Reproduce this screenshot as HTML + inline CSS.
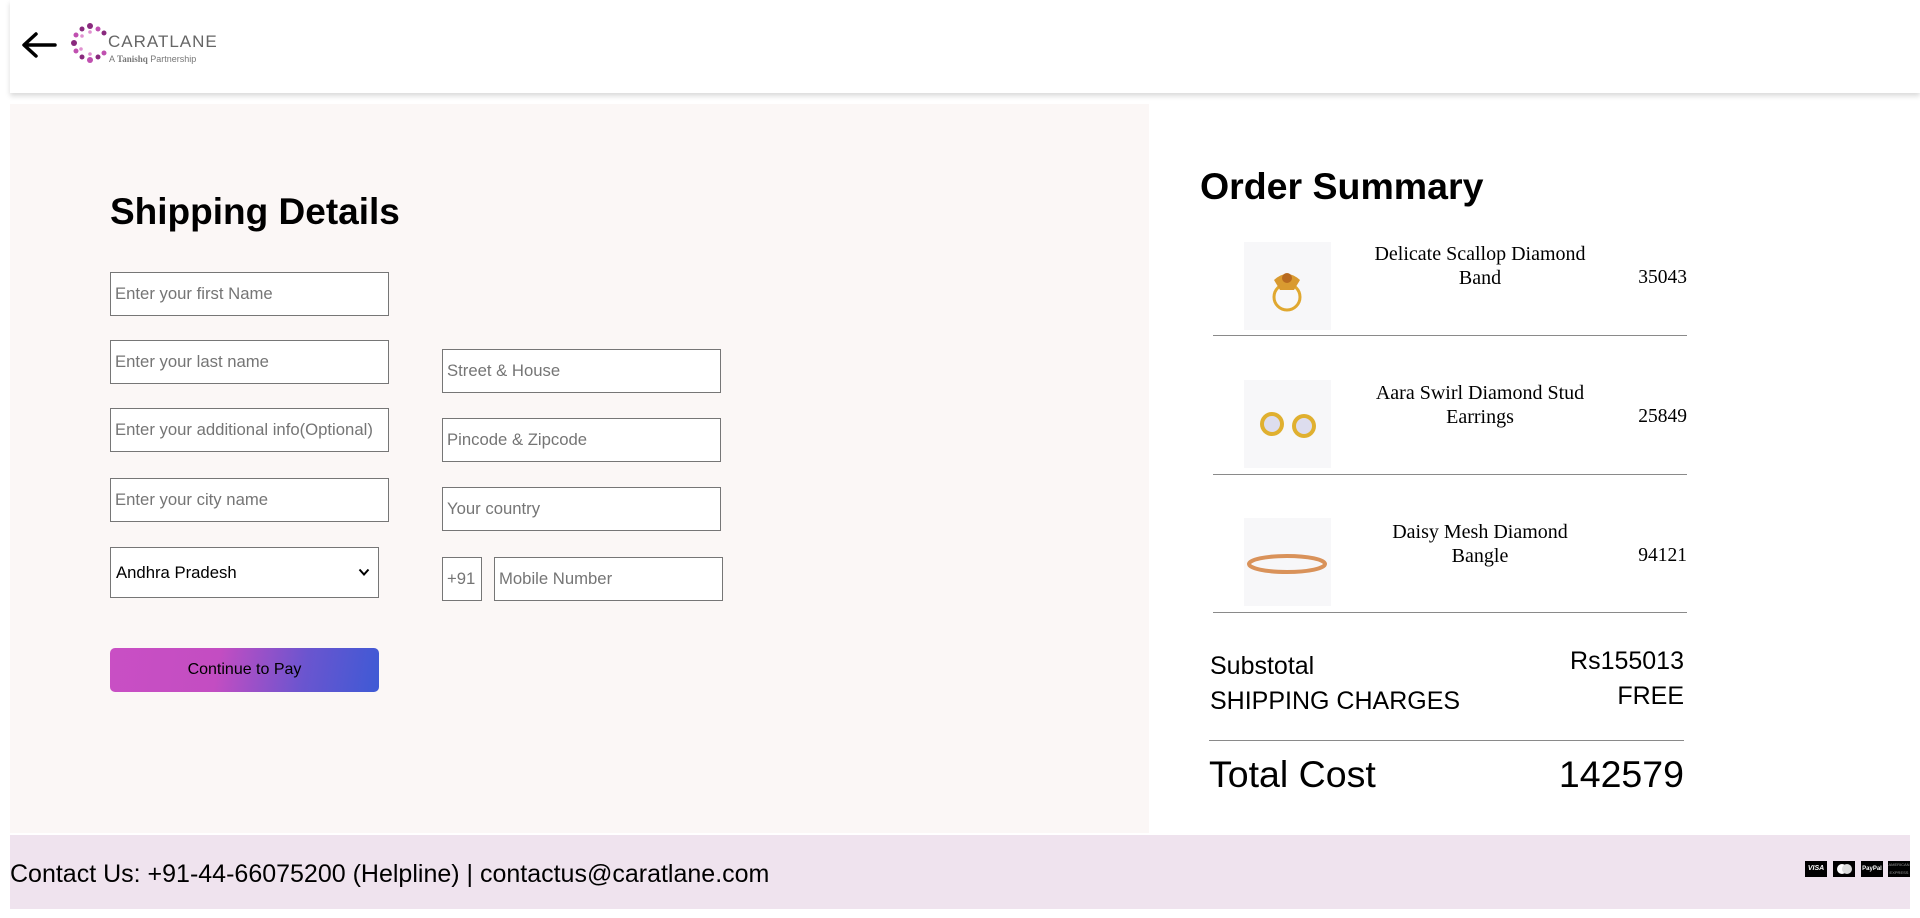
<!DOCTYPE html>
<html><head><meta charset="utf-8"><style>
*{box-sizing:border-box;margin:0;padding:0}
body{width:1920px;height:918px;background:#fff;font-family:"Liberation Sans",Arial,sans-serif;position:relative;overflow:hidden}
.a{position:absolute}
.hdr{left:10px;top:0;width:1910px;height:93px;background:#fff;box-shadow:0 3px 5px rgba(0,0,0,.15)}
.left{left:10px;top:104px;width:1139px;height:729px;background:#fbf7f6}
.inp{position:absolute;height:44px;border:1px solid #767676;background:#fff;font-size:16.7px;color:#757575;padding-left:4px;line-height:42px;white-space:nowrap;overflow:hidden}
.serif{font-family:"Liberation Serif","Times New Roman",serif}
.name{position:absolute;width:270px;text-align:center;font-size:20px;line-height:24px}
.price{position:absolute;right:233px;font-size:19.5px}
.img{position:absolute;left:1244px;width:87px;height:88px;background:#f7f7f9}
.hr{position:absolute;left:1213px;width:474px;height:1px;background:#8a8a8a}
.foot{left:10px;top:835px;width:1900px;height:74px;background:#efe3ee}
</style></head><body>
<div class="a hdr"></div>
<svg class="a" style="left:20px;top:30px" width="38" height="30" viewBox="0 0 38 30"><path d="M35 15H5M16 4L4 15l12 11" fill="none" stroke="#000" stroke-width="3.5" stroke-linecap="round" stroke-linejoin="round"/></svg>
<svg class="a" style="left:70px;top:22px" width="40" height="42" viewBox="0 0 40 42">
<g fill="#8a2a7e"><circle cx="20" cy="4" r="3"/><circle cx="12" cy="7" r="2.5"/><circle cx="28" cy="7" r="2.5" fill="#c050b0"/><circle cx="6" cy="13" r="2.5" fill="#c050b0"/><circle cx="4" cy="21" r="3"/><circle cx="6" cy="29" r="2.5" fill="#c050b0"/><circle cx="12" cy="35" r="2.5"/><circle cx="20" cy="38" r="3" fill="#c050b0"/><circle cx="28" cy="35" r="2.5"/><circle cx="34" cy="31" r="2.5" fill="#c050b0"/><circle cx="34" cy="11" r="2.5"/><circle cx="12" cy="14" r="1.8" fill="#e090d0"/><circle cx="11" cy="27" r="1.8" fill="#e090d0"/><circle cx="20" cy="32" r="1.8" fill="#e090d0"/><circle cx="20" cy="10" r="1.8" fill="#e090d0"/></g></svg>
<div class="a" style="left:108px;top:32px;font-size:17px;color:#666;letter-spacing:1px">CARATLANE</div>
<div class="a" style="left:109px;top:54px;font-size:9px;color:#777">A <b style="font-family:'Liberation Serif',serif">Tanishq</b> Partnership</div>

<div class="a left"></div>
<div class="a" style="left:110px;top:191px;font-size:37px;font-weight:bold">Shipping Details</div>
<div class="inp" style="left:110px;top:272px;width:279px">Enter your first Name</div>
<div class="inp" style="left:110px;top:340px;width:279px">Enter your last name</div>
<div class="inp" style="left:110px;top:408px;width:279px">Enter your additional info(Optional)</div>
<div class="inp" style="left:110px;top:478px;width:279px">Enter your city name</div>
<div class="inp" style="left:110px;top:547px;width:269px;height:51px;line-height:49px;color:#000;padding-left:5px">Andhra Pradesh
<svg style="position:absolute;right:8px;top:20px" width="12" height="9" viewBox="0 0 12 9"><path d="M1.5 1.5l4.5 5 4.5-5" fill="none" stroke="#000" stroke-width="2"/></svg></div>
<div class="inp" style="left:442px;top:349px;width:279px">Street &amp; House</div>
<div class="inp" style="left:442px;top:418px;width:279px">Pincode &amp; Zipcode</div>
<div class="inp" style="left:442px;top:487px;width:279px">Your country</div>
<div class="inp" style="left:442px;top:557px;width:40px">+91</div>
<div class="inp" style="left:494px;top:557px;width:229px">Mobile Number</div>
<div class="a" style="left:110px;top:648px;width:269px;height:44px;border-radius:5px;background:linear-gradient(100deg,#c94fc4 0%,#c34dc2 40%,#6a55cf 72%,#3e5ad5 100%);font-size:16px;text-align:center;line-height:44px">Continue to Pay</div>

<div class="a" style="left:1200px;top:165px;font-size:37.5px;font-weight:bold">Order Summary</div>
<div class="img" style="top:242px"><svg width="87" height="88"><circle cx="43" cy="55" r="13" fill="none" stroke="#e0a830" stroke-width="3"/><path d="M30 38q13-12 26 0l-6 10h-14z" fill="#d99a30"/><circle cx="43" cy="36" r="5" fill="#b86a20"/></svg></div>
<div class="img" style="top:380px"><svg width="87" height="88"><circle cx="28" cy="44" r="12" fill="#e0b030"/><circle cx="28" cy="44" r="8" fill="#dde"/><circle cx="60" cy="46" r="12" fill="#e0b030"/><circle cx="60" cy="46" r="8" fill="#dde"/></svg></div>
<div class="img" style="top:518px"><svg width="87" height="88"><ellipse cx="43" cy="46" rx="38" ry="8" fill="none" stroke="#d9925a" stroke-width="4"/></svg></div>
<div class="name serif" style="left:1345px;top:242px">Delicate Scallop Diamond<br>Band</div>
<div class="price serif" style="top:267px">35043</div>
<div class="hr" style="top:335px"></div>
<div class="name serif" style="left:1345px;top:381px">Aara Swirl Diamond Stud<br>Earrings</div>
<div class="price serif" style="top:406px">25849</div>
<div class="hr" style="top:474px"></div>
<div class="name serif" style="left:1345px;top:520px">Daisy Mesh Diamond<br>Bangle</div>
<div class="price serif" style="top:545px">94121</div>
<div class="hr" style="top:612px"></div>

<div class="a" style="left:1210px;top:652px;font-size:25px">Substotal</div>
<div class="a" style="right:236px;top:647px;font-size:25px">Rs155013</div>
<div class="a" style="left:1210px;top:687px;font-size:25px">SHIPPING CHARGES</div>
<div class="a" style="right:236px;top:682px;font-size:25px">FREE</div>
<div class="a" style="left:1209px;top:740px;width:475px;height:1px;background:#8a8a8a"></div>
<div class="a" style="left:1209px;top:753px;font-size:37.5px">Total Cost</div>
<div class="a" style="right:236px;top:753px;font-size:37.5px">142579</div>

<div class="a foot"></div>
<div class="a" style="left:10px;top:860px;font-size:25px">Contact Us: +91-44-66075200 (Helpline) | contactus@caratlane.com</div>
<div class="a" style="left:1805px;top:861px;width:22px;height:16px;background:#000;color:#fff;font-size:7px;font-weight:bold;line-height:16px;text-align:center;font-style:italic">VISA</div>
<div class="a" style="left:1833px;top:861px;width:22px;height:16px;background:#000"><div class="a" style="left:4px;top:3px;width:10px;height:10px;border-radius:50%;background:#fff"></div><div class="a" style="left:9px;top:3px;width:10px;height:10px;border-radius:50%;background:#ddd"></div></div>
<div class="a" style="left:1861px;top:861px;width:22px;height:16px;background:#000;color:#fff;font-size:6px;font-weight:bold;line-height:16px;text-align:center">PayPal</div>
<div class="a" style="left:1888px;top:861px;width:22px;height:16px;background:#000;color:#999;font-size:4px;line-height:8px;text-align:center">AMERICAN EXPRESS</div>
</body></html>
